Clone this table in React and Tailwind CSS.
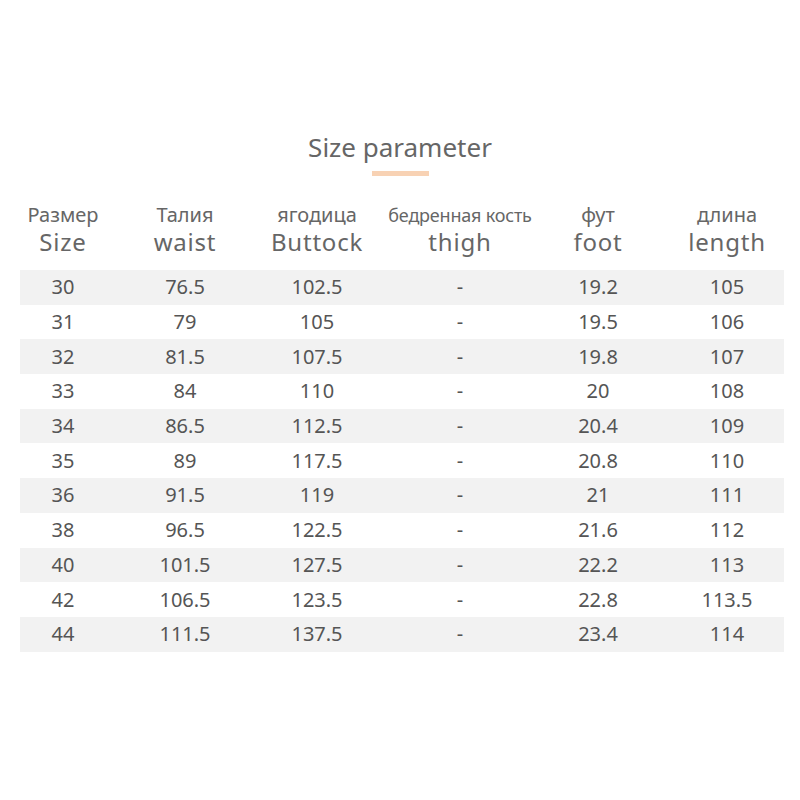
import React from 'react';

const columns = [
  { ru: 'Размер', en: 'Size' },
  { ru: 'Талия', en: 'waist' },
  { ru: 'ягодица', en: 'Buttock' },
  { ru: 'бедренная кость', en: 'thigh', small: true },
  { ru: 'фут', en: 'foot' },
  { ru: 'длина', en: 'length' },
];

const rows = [
  ['30', '76.5', '102.5', '-', '19.2', '105'],
  ['31', '79', '105', '-', '19.5', '106'],
  ['32', '81.5', '107.5', '-', '19.8', '107'],
  ['33', '84', '110', '-', '20', '108'],
  ['34', '86.5', '112.5', '-', '20.4', '109'],
  ['35', '89', '117.5', '-', '20.8', '110'],
  ['36', '91.5', '119', '-', '21', '111'],
  ['38', '96.5', '122.5', '-', '21.6', '112'],
  ['40', '101.5', '127.5', '-', '22.2', '113'],
  ['42', '106.5', '123.5', '-', '22.8', '113.5'],
  ['44', '111.5', '137.5', '-', '23.4', '114'],
];

// fixed column widths so each column centre lines up with the reference
const gridCols = 'grid grid-cols-[86px_158px_106px_180px_96px_138px]';

export default function App() {
  return (
    <div
      className="w-[800px] h-[800px] bg-white text-[#555] pt-[129px]"
      style={{ fontFamily: '"Noto Sans", "Open Sans", sans-serif' }}
    >
      {/* Title */}
      <div className="flex flex-col items-center">
        <h1 className="text-[26px] leading-[36px] text-[#666]">Size parameter</h1>
        <div className="mt-[6px] h-[5px] w-[57px] bg-[#f8d2b4]" />
      </div>

      {/* Header */}
      <div className={`${gridCols} mx-[20px] mt-[28px] mb-[15px]`}>
        {columns.map((c, i) => (
          <div key={c.en} className={`flex flex-col items-center ${i === 5 ? 'pl-[24px]' : ''}`}>
            <span
              className={`${c.small ? 'text-[18px] tracking-[-0.2px]' : 'text-[20px]'} h-[22px] leading-[22px] text-[#666] whitespace-nowrap`}
            >
              {c.ru}
            </span>
            <span className="mt-[3px] text-[24px] h-[26px] leading-[26px] tracking-[0.8px] text-[#666]">{c.en}</span>
          </div>
        ))}
      </div>

      {/* Body */}
      <div className="mx-[20px] w-[764px]">
        {rows.map((r, ri) => (
          <div
            key={r[0]}
            className={`${gridCols} h-[34.7px] items-center text-[20px] ${ri % 2 === 0 ? 'bg-[#f2f2f2]' : ''}`}
          >
            {r.map((v, i) => (
              <div key={i} className={`text-center leading-none ${i === 5 ? 'pl-[24px]' : ''}`}>
                {v}
              </div>
            ))}
          </div>
        ))}
      </div>
    </div>
  );
}
